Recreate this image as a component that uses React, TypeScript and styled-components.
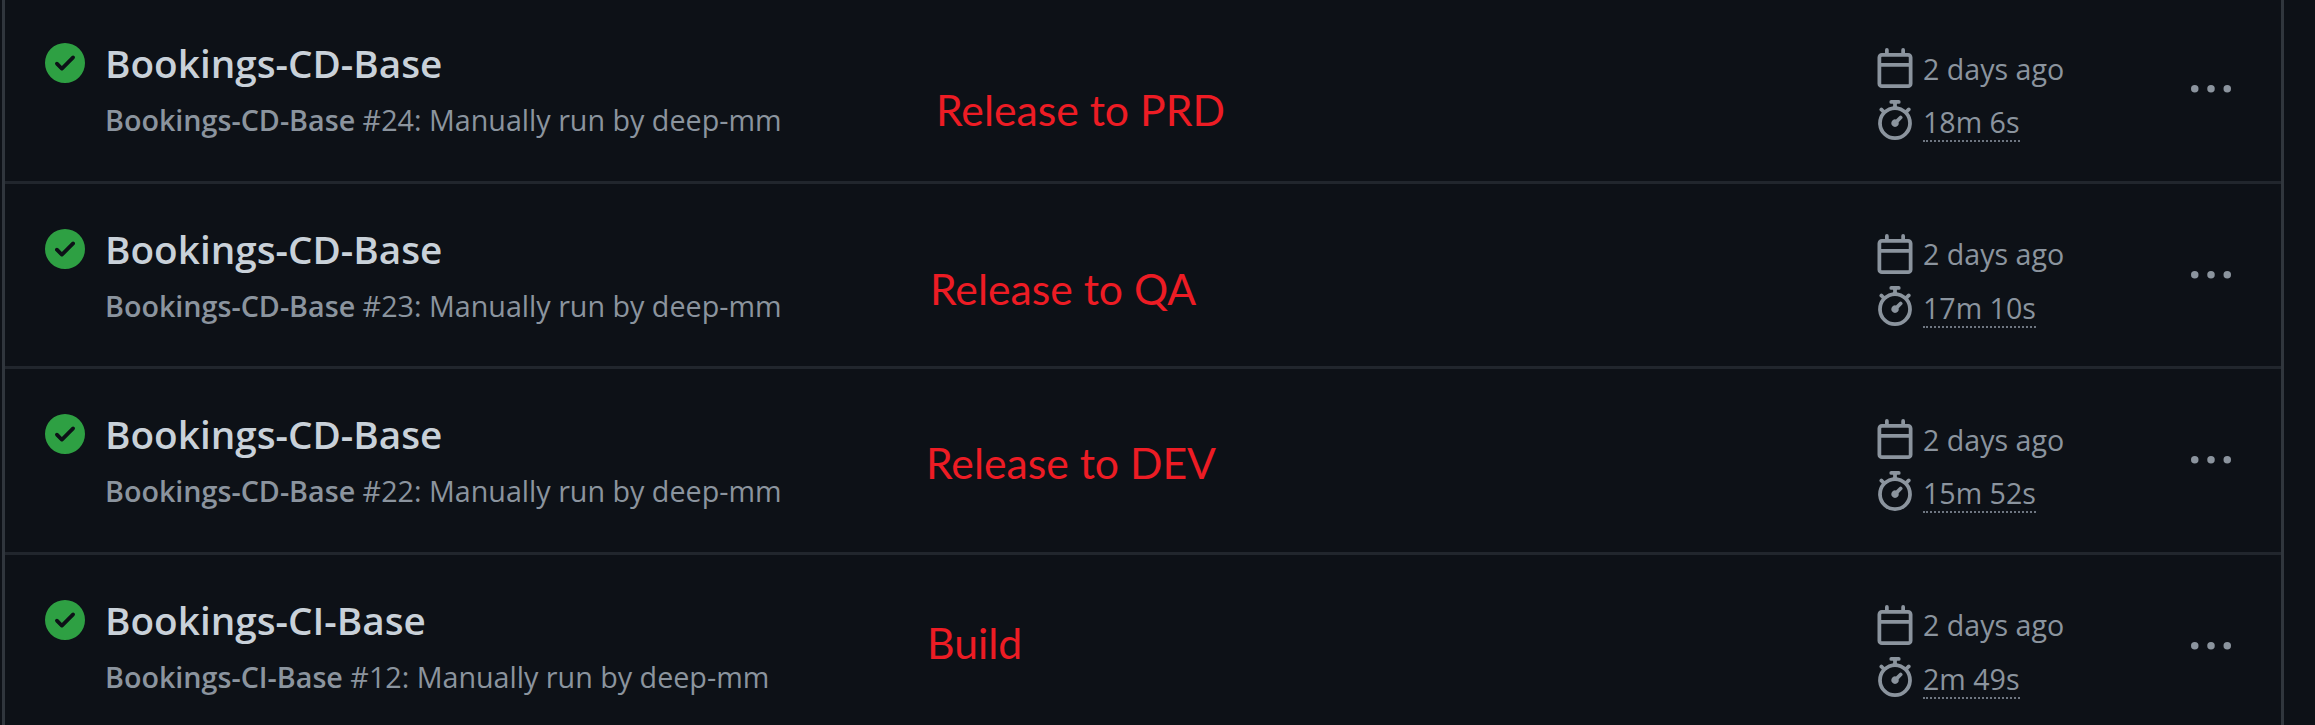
import React from "react";
import styled, {createGlobalStyle} from "styled-components";

const runs = [
    {name: "Bookings-CD-Base", id: 24, age: "2 days ago", took: "18m 6s", note: "Release to PRD", noteX: 936, noteY: 87},
    {name: "Bookings-CD-Base", id: 23, age: "2 days ago", took: "17m 10s", note: "Release to QA", noteX: 930, noteY: 80},
    {name: "Bookings-CD-Base", id: 22, age: "2 days ago", took: "15m 52s", note: "Release to DEV", noteX: 926, noteY: 69},
    {name: "Bookings-CI-Base", id: 12, age: "2 days ago", took: "2m 49s", note: "Build", noteX: 927, noteY: 63},
];

const CheckIcon = () => (
    <svg width="40" height="40" viewBox="0 0 16 16" fill="currentColor">
        <path d="M8 16A8 8 0 1 1 8 0a8 8 0 0 1 0 16Zm3.78-9.72a.751.751 0 0 0-.018-1.042.751.751 0 0 0-1.042-.018L6.75 9.19 5.28 7.72a.751.751 0 0 0-1.042.018.751.751 0 0 0-.018 1.042l2 2a.75.75 0 0 0 1.06 0Z"/>
    </svg>
)

const CalendarIcon = () => (
    <svg width="40" height="40" viewBox="0 0 16 16" fill="currentColor">
        <path d="M4.75 0a.75.75 0 0 1 .75.75V2h5V.75a.75.75 0 0 1 1.5 0V2h1.25c.966 0 1.75.784 1.75 1.75v10.5A1.75 1.75 0 0 1 13.25 16H2.75A1.75 1.75 0 0 1 1 14.25V3.75C1 2.784 1.784 2 2.75 2H4V.75A.75.75 0 0 1 4.75 0ZM2.5 7.5v6.75c0 .138.112.25.25.25h10.5a.25.25 0 0 0 .25-.25V7.5Zm10.75-4H2.75a.25.25 0 0 0-.25.25V6h11V3.75a.25.25 0 0 0-.25-.25Z"/>
    </svg>
)

const StopwatchIcon = () => (
    <svg width="40" height="40" viewBox="0 0 16 16" fill="currentColor">
        <path d="M5.75.75A.75.75 0 0 1 6.5 0h3a.75.75 0 0 1 0 1.5h-.75v1l-.001.041a6.724 6.724 0 0 1 3.464 1.435l.007-.006.75-.75a.747.747 0 0 1 1.06 1.06l-.75.75-.006.007a6.75 6.75 0 1 1-10.548 0L2.72 5.03l-.75-.75a.751.751 0 0 1 1.06-1.06l.75.75.007.006A6.72 6.72 0 0 1 7.25 2.541V1.5H6.5a.75.75 0 0 1-.75-.75ZM8 14.5a5.25 5.25 0 1 0-.001-10.501A5.25 5.25 0 0 0 8 14.5Zm.389-6.7 1.33-1.33a.75.75 0 1 1 1.061 1.06L9.45 8.861A1.503 1.503 0 0 1 8 10.75a1.499 1.499 0 1 1 .389-2.95Z"/>
    </svg>
)

const KebabIcon = () => (
    <svg width="40" height="40" viewBox="0 0 16 16" fill="currentColor">
        <path d="M8 9a1.5 1.5 0 1 0 0-3 1.5 1.5 0 0 0 0 3ZM1.5 9a1.5 1.5 0 1 0 0-3 1.5 1.5 0 0 0 0 3Zm13 0a1.5 1.5 0 1 0 0-3 1.5 1.5 0 0 0 0 3Z"/>
    </svg>
)

export default function App() {
    return (
        <>
            <GlobalStyle/>
            <List>
                {runs.map(run => (
                    <Row key={run.id}>
                        <Status><CheckIcon/></Status>
                        <Info>
                            <Title>{run.name}</Title>
                            <Sub><b>{run.name}</b> #{run.id}: Manually run by deep-mm</Sub>
                        </Info>
                        <Note $x={run.noteX} $y={run.noteY}>{run.note}</Note>
                        <Meta>
                            <MetaLine><CalendarIcon/><span>{run.age}</span></MetaLine>
                            <MetaLine><StopwatchIcon/><Duration>{run.took}</Duration></MetaLine>
                        </Meta>
                        <More><KebabIcon/></More>
                    </Row>
                ))}
            </List>
        </>
    )
}

const GlobalStyle = createGlobalStyle`
  html, body {
    margin: 0;
    height: 725px;
    overflow: hidden;
    background-color: #0d1117;
  }
`

const List = styled.div`
  width: 2276px;
  margin-left: 2px;
  margin-top: -2px;
  border-left: 3px solid #30363d;
  border-right: 3px solid #30363d;
  font-family: "Open Sans", sans-serif;
`

const Row = styled.div`
  position: relative;
  height: 182.6px;
  display: flex;
  border-bottom: 3px solid #21262d;
`

const Status = styled.div`
  width: 60px;
  margin-left: 40px;
  padding-top: 45px;
  color: #2ea043;
`

const Info = styled.div`
  flex: 1;
  padding-top: 41px;
`

const Title = styled.div`
  font-size: 38.7px;
  font-weight: 600;
  line-height: 48px;
  color: #c9d1d9;
`

const Sub = styled.div`
  margin-top: 13px;
  font-size: 28.7px;
  line-height: 40px;
  color: #8b949e;

  b {
    font-weight: 600;
  }
`

const Note = styled.div<{ $x: number, $y: number }>`
  position: absolute;
  left: ${props => props.$x - 5}px;
  top: ${props => props.$y}px;
  font-family: Lato, sans-serif;
  font-size: 42.7px;
  line-height: 50px;
  white-space: nowrap;
  color: #ed1c24;
`

const Meta = styled.div`
  width: 316px;
  padding-top: 50px;
  display: flex;
  flex-direction: column;
  gap: 12px;
  color: #8b949e;
`

const MetaLine = styled.div`
  display: flex;
  align-items: center;
  gap: 8px;
  height: 40px;
  font-size: 28.6px;
`

const Duration = styled.span`
  align-self: flex-start;
  margin-top: 4px;
  line-height: 36px;
  border-bottom: 2px dotted #6e7681;
`

const More = styled.div`
  width: 90px;
  padding-top: 72px;
  color: #8b949e;
`
